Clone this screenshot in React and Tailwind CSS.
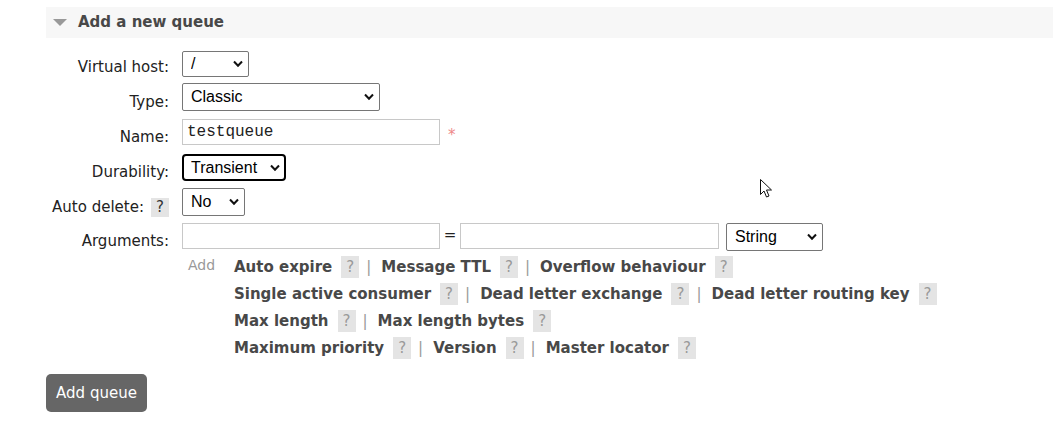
import React from 'react'

const linkRows = [
  ['Auto expire', 'Message TTL', 'Overflow behaviour'],
  ['Single active consumer', 'Dead letter exchange', 'Dead letter routing key'],
  ['Max length', 'Max length bytes'],
  ['Maximum priority', 'Version', 'Master locator'],
]

function Chevron() {
  return (
    <svg
      className="pointer-events-none absolute right-[6px] top-1/2 -translate-y-1/2"
      width="10" height="7" viewBox="0 0 10 7" fill="none" stroke="#111" strokeWidth="2"
    >
      <polyline points="1,1 5,5.2 9,1" />
    </svg>
  )
}

function Select({ value, options, className, focused }) {
  const box = focused
    ? 'border-2 border-black rounded-[4px] pl-[7px]'
    : 'border border-[#767676] rounded-[2px] pl-[8px]'
  return (
    <div className={`relative ${className}`}>
      <select
        defaultValue={value}
        className={`h-full w-full appearance-none bg-white pr-[20px] font-['Liberation_Sans',Arial,sans-serif] text-[16px] text-black outline-none ${box}`}
      >
        {options.map(o => <option key={o}>{o}</option>)}
      </select>
      <Chevron />
    </div>
  )
}

function Help({ dark }) {
  return (
    <span className={`inline-flex w-[18px] shrink-0 items-center justify-center bg-[#e4e4e4] text-[15px] font-normal ${dark ? 'h-[19px] text-[#333]' : 'h-[22px] text-[#999]'}`}>?</span>
  )
}

export default function App() {
  return (
    <div className="relative h-[428px] w-[1053px] overflow-hidden bg-white font-['DejaVu_Sans',Verdana,sans-serif] text-[15px] text-[#222]">
      <div className="pl-[46px]">
        {/* Section header */}
        <div className="mt-[7px] flex h-[31px] items-center bg-[#f7f7f7]">
          <svg className="ml-[7px]" width="14" height="7" viewBox="0 0 14 7">
            <polygon points="0,0 14,0 7,7" fill="#999" />
          </svg>
          <h2 className="ml-[11px] text-[15px] font-bold text-[#484848]">Add a new queue</h2>
        </div>

        <div className="mt-[13px]">
          {/* Virtual host */}
          <div className="flex h-[32px] items-start">
            <label className="w-[123px] pt-[8px] text-right leading-[17px]">Virtual host:</label>
            <Select className="ml-[13px] h-[26px] w-[67px]" value="/" options={['/']} />
          </div>

          {/* Type */}
          <div className="flex h-[35px] items-start">
            <label className="w-[123px] pt-[11px] text-right leading-[17px]">Type:</label>
            <Select className="ml-[13px] h-[28px] w-[198px]" value="Classic" options={['Classic', 'Quorum', 'Stream']} />
          </div>

          {/* Name */}
          <div className="flex h-[35px] items-start">
            <label className="w-[123px] pt-[11px] text-right leading-[17px]">Name:</label>
            <input
              type="text"
              defaultValue="testqueue"
              className="ml-[13px] mt-[1px] h-[26px] w-[258px] border border-[#c8c8c8] bg-white pl-[4px] font-['Liberation_Mono','Courier_New',monospace] text-[16px] text-[#222] outline-none"
            />
            <span className="ml-[8px] mt-[6px] text-[15px] text-[#ee8888]">*</span>
          </div>

          {/* Durability */}
          <div className="flex h-[35px] items-start">
            <label className="w-[123px] pt-[11px] text-right leading-[17px]">Durability:</label>
            <Select className="ml-[13px] mt-[1px] h-[27px] w-[104px]" value="Transient" options={['Durable', 'Transient']} focused />
          </div>

          {/* Auto delete */}
          <div className="flex h-[34px] items-start">
            <div className="mt-[10px] flex h-[19px] w-[123px] items-center justify-end">
              <label className="leading-[17px]">Auto delete:</label>
              <span className="ml-[7px] flex"><Help dark /></span>
            </div>
            <Select className="ml-[13px] h-[28px] w-[63px]" value="No" options={['No', 'Yes']} />
          </div>

          {/* Arguments */}
          <div className="flex h-[33px] items-start">
            <label className="w-[123px] pt-[11px] text-right leading-[17px]">Arguments:</label>
            <div className="ml-[13px] flex items-start">
              <input type="text" className="mt-[1px] h-[26px] w-[258px] border border-[#c8c8c8] bg-white outline-none" />
              <span className="w-[20px] pt-[5px] text-center text-[15px] leading-[17px]">=</span>
              <input type="text" className="mt-[1px] h-[26px] w-[259px] border border-[#c8c8c8] bg-white outline-none" />
              <Select className="ml-[7px] mt-[1px] h-[28px] w-[97px]" value="String" options={['String', 'Number', 'Boolean', 'List']} />
            </div>
          </div>

          {/* Argument shortcuts */}
          <div className="mt-[1px] flex items-start">
            <div className="w-[123px]" />
            <div className="ml-[13px] flex items-start">
              <span className="w-[52px] pl-[6px] pt-[1px] text-[14px] leading-[17px] text-[#999]">Add</span>
              <div className="flex flex-col gap-[5px]">
                {linkRows.map((row, r) => (
                  <div key={r} className="flex h-[22px] items-center font-bold text-[#484848]">
                    {row.map((label, i) => (
                      <React.Fragment key={label}>
                        {i > 0 && <span className="ml-[7px] mr-[10px] font-normal text-[#999]">|</span>}
                        <span>{label}</span>
                        <span className="ml-[9px] flex"><Help /></span>
                      </React.Fragment>
                    ))}
                  </div>
                ))}
              </div>
            </div>
          </div>
        </div>

        <button className="mt-[15px] h-[38px] w-[101px] rounded-[5px] bg-[#666] text-[15px] text-white">
          Add queue
        </button>
      </div>

      {/* mouse pointer */}
      <svg className="absolute left-[760px] top-[179px]" width="13" height="20" viewBox="0 0 13 20">
        <path d="M0.5 0.5 L0.5 15.5 L4 12 L6.5 18 L9 17 L6.5 11 L11.5 11 Z" fill="#fff" stroke="#111" strokeWidth="1" strokeLinejoin="round" />
      </svg>
    </div>
  )
}
